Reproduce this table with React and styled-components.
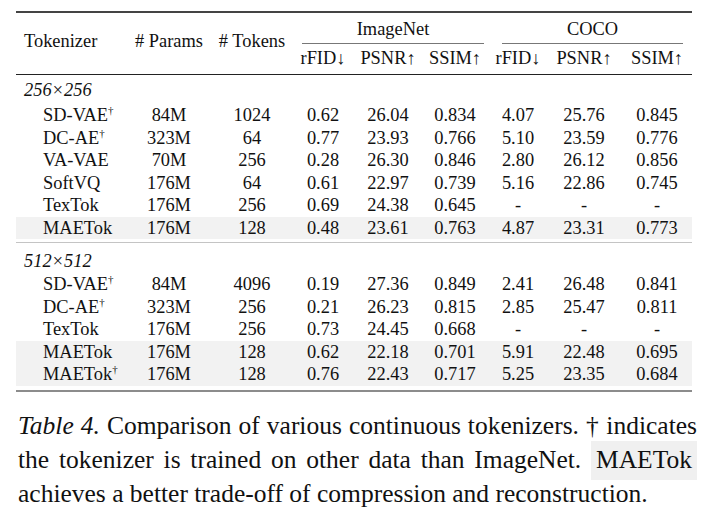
import React from 'react';
import styled, { createGlobalStyle } from 'styled-components';

const GlobalStyle = createGlobalStyle`
    html, body {
        margin:0;
        padding:0;
        background:#fff;
    }
    body {
        font-family:"Liberation Serif", "Times New Roman", serif;
        color:#111;
    }
`

const Page = styled.div`
    width:708px;
    height:514px;
    padding:11px 16px 0;
    box-sizing:border-box;
    overflow:hidden;
`
const Table = styled.table`
    width:676px;
    table-layout:fixed;
    border-collapse:collapse;
    font-size:18.4px;
    border-top:2px solid #444;
    border-bottom:2px solid #8c8c8c;
`
const Col = styled.col`
    width:${props => props.$w}px;
`
const Head = styled.thead`
    border-bottom:1px solid #222;
`
const HeadCell = styled.th`
    font-weight:normal;
    line-height:22px;
    padding:0 0 6px;
    text-align:${props => props.$left ? "left" : "center"};
    padding-left:${props => props.$left ? "8px" : "0"};
    vertical-align:middle;
    white-space:nowrap;
`
const GroupCell = styled.th`
    font-weight:normal;
    padding:0;
`
const GroupLabel = styled.div`
    line-height:22px;
    padding:5px 0 3px;
    margin:${props => props.$margin};
    border-bottom:1px solid #777;
`
const MetricCell = styled.th`
    font-weight:normal;
    line-height:22px;
    padding:3px 0 5px;
    text-align:center;
    white-space:nowrap;
`
const Section = styled.tbody`
    border-top:${props => props.$rule ? "1px solid #c4c4c4" : "none"};
`
const SectionCell = styled.td`
    font-style:italic;
    line-height:22px;
    padding:${props => props.$top}px 8px ${props => props.$bottom}px;
`
const Row = styled.tr`
    background:${props => props.$hl ? "#f2f2f2" : "transparent"};
`
const NameCell = styled.td`
    line-height:22.5px;
    padding:0 0 0 27px;
    white-space:nowrap;
`
const Cell = styled.td`
    line-height:22.5px;
    padding:0;
    text-align:center;
    white-space:nowrap;
`
const Gap = styled.td`
    height:${props => props.$h}px;
    padding:0;
    line-height:0;
`
const Dagger = styled.sup`
    font-size:11px;
    line-height:0;
    vertical-align:7px;
`
const Caption = styled.p`
    width:679px;
    margin:17px 0 0 2px;
    font-size:25.5px;
    line-height:34px;
    text-align:justify;
`
const Em = styled.em`
    font-style:italic;
`
const Mark = styled.span`
    background:#f0f0f0;
    padding:4px 5px 6px;
`

const widths = [108, 90, 76, 66, 64, 70, 56, 76, 70];

const first = [
    { name: "SD-VAE", dag: true, p: "84M", t: "1024", v: ["0.62", "26.04", "0.834", "4.07", "25.76", "0.845"] },
    { name: "DC-AE", dag: true, p: "323M", t: "64", v: ["0.77", "23.93", "0.766", "5.10", "23.59", "0.776"] },
    { name: "VA-VAE", p: "70M", t: "256", v: ["0.28", "26.30", "0.846", "2.80", "26.12", "0.856"] },
    { name: "SoftVQ", p: "176M", t: "64", v: ["0.61", "22.97", "0.739", "5.16", "22.86", "0.745"] },
    { name: "TexTok", p: "176M", t: "256", v: ["0.69", "24.38", "0.645", "-", "-", "-"] },
    { name: "MAETok", p: "176M", t: "128", v: ["0.48", "23.61", "0.763", "4.87", "23.31", "0.773"], hl: true },
];

const second = [
    { name: "SD-VAE", dag: true, p: "84M", t: "4096", v: ["0.19", "27.36", "0.849", "2.41", "26.48", "0.841"] },
    { name: "DC-AE", dag: true, p: "323M", t: "256", v: ["0.21", "26.23", "0.815", "2.85", "25.47", "0.811"] },
    { name: "TexTok", p: "176M", t: "256", v: ["0.73", "24.45", "0.668", "-", "-", "-"] },
    { name: "MAETok", p: "176M", t: "128", v: ["0.62", "22.18", "0.701", "5.91", "22.48", "0.695"], hl: true },
    { name: "MAETok", dag: true, p: "176M", t: "128", v: ["0.76", "22.43", "0.717", "5.25", "23.35", "0.684"], hl: true },
];

const DataRow = ({ row }) => (
    <Row $hl={row.hl}>
        <NameCell>{row.name}{row.dag && <Dagger>†</Dagger>}</NameCell>
        <Cell>{row.p}</Cell>
        <Cell>{row.t}</Cell>
        {row.v.map((v, i) => <Cell key={i}>{v}</Cell>)}
    </Row>
)

const metrics = ["rFID↓", "PSNR↑", "SSIM↑", "rFID↓", "PSNR↑", "SSIM↑"];

export default function App() {
    return (
        <Page>
            <GlobalStyle />
            <Table>
                <colgroup>
                    {widths.map((w, i) => <Col key={i} $w={w} />)}
                </colgroup>
                <Head>
                    <tr>
                        <HeadCell rowSpan={2} $left>Tokenizer</HeadCell>
                        <HeadCell rowSpan={2}># Params</HeadCell>
                        <HeadCell rowSpan={2}># Tokens</HeadCell>
                        <GroupCell colSpan={3}><GroupLabel $margin="0 6px 0 12px">ImageNet</GroupLabel></GroupCell>
                        <GroupCell colSpan={3}><GroupLabel $margin="0 9px 0 12px">COCO</GroupLabel></GroupCell>
                    </tr>
                    <tr>
                        {metrics.map((m, i) => <MetricCell key={i}>{m}</MetricCell>)}
                    </tr>
                </Head>
                <Section>
                    <tr><SectionCell colSpan={9} $top={4} $bottom={3}>256×256</SectionCell></tr>
                    {first.map((r, i) => <DataRow key={i} row={r} />)}
                    <tr><Gap colSpan={9} $h={3} /></tr>
                </Section>
                <Section $rule>
                    <tr><SectionCell colSpan={9} $top={7} $bottom={1}>512×512</SectionCell></tr>
                    {second.map((r, i) => <DataRow key={i} row={r} />)}
                    <tr><Gap colSpan={9} $h={4} /></tr>
                </Section>
            </Table>
            <Caption>
                <Em>Table 4.</Em> Comparison of various continuous tokenizers. † indicates the tokenizer is trained on other data than ImageNet. <Mark>MAETok</Mark> achieves a better trade-off of compression and reconstruction.
            </Caption>
        </Page>
    );
}
